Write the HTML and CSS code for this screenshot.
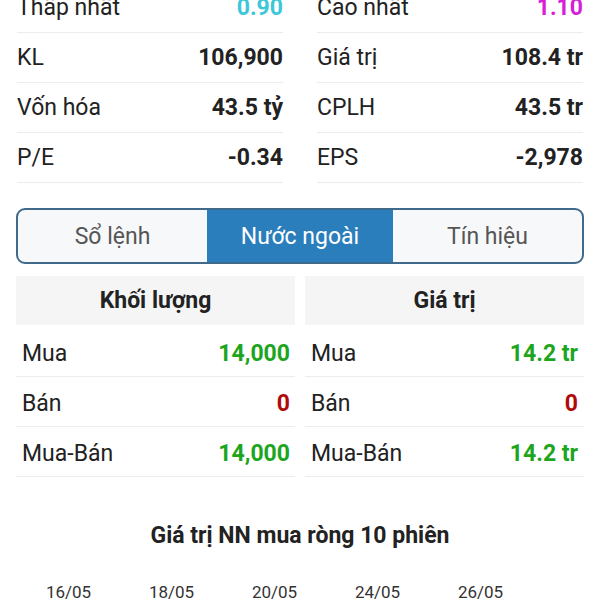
FILE: index.html
```html
<!DOCTYPE html>
<html lang="vi">
<head>
    <meta charset="UTF-8">
    <meta name="viewport" content="width=device-width, initial-scale=1.0">
    <title>Nước ngoài</title>
    <link rel="stylesheet" href="styles.css">
</head>
<body>
    <div class="page">
        <div class="stats">
            <div class="stat-col">
                <div class="stat-row"><span>Thấp nhất</span><b class="low">0.90</b></div>
                <div class="stat-row"><span>KL</span><b>106,900</b></div>
                <div class="stat-row"><span>Vốn hóa</span><b>43.5 tỷ</b></div>
                <div class="stat-row"><span>P/E</span><b>-0.34</b></div>
            </div>
            <div class="stat-col">
                <div class="stat-row"><span>Cao nhất</span><b class="high">1.10</b></div>
                <div class="stat-row"><span>Giá trị</span><b>108.4 tr</b></div>
                <div class="stat-row"><span>CPLH</span><b>43.5 tr</b></div>
                <div class="stat-row"><span>EPS</span><b>-2,978</b></div>
            </div>
        </div>

        <div class="tabs">
            <div class="tab">Sổ lệnh</div>
            <div class="tab active">Nước ngoài</div>
            <div class="tab">Tín hiệu</div>
        </div>

        <div class="foreign">
            <div class="f-table">
                <div class="f-head">Khối lượng</div>
                <div class="f-row"><span>Mua</span><b class="up">14,000</b></div>
                <div class="f-row"><span>Bán</span><b class="down">0</b></div>
                <div class="f-row"><span>Mua-Bán</span><b class="up">14,000</b></div>
            </div>
            <div class="f-table">
                <div class="f-head">Giá trị</div>
                <div class="f-row"><span>Mua</span><b class="up">14.2 tr</b></div>
                <div class="f-row"><span>Bán</span><b class="down">0</b></div>
                <div class="f-row"><span>Mua-Bán</span><b class="up">14.2 tr</b></div>
            </div>
        </div>

        <div class="chart-title">Giá trị NN mua ròng 10 phiên</div>
        <div class="chart-axis">
            <span>16/05</span>
            <span>18/05</span>
            <span>20/05</span>
            <span>24/05</span>
            <span>26/05</span>
        </div>
    </div>
</body>
</html>
```

FILE: styles.css
```css
body {
    margin: 0;
    background-color: #fff;
    font-family: Roboto, "Noto Sans", sans-serif;
    color: #222;
    overflow: hidden;
}

.page {
    margin-top: -17px;
}

/* Thong tin co ban */
.stats {
    display: flex;
    gap: 34px;
    padding: 0 17px;
}

.stat-col {
    flex: 1;
}

.stat-row {
    display: flex;
    justify-content: space-between;
    align-items: center;
    height: 49px;
    border-bottom: 1px solid #ececec;
    font-size: 23px;
}

.stat-row b {
    font-weight: 700;
    color: #222;
}

.stat-row b.low {
    color: #3cc8d8;
}

.stat-row b.high {
    color: #d81fd8;
}

/* Tabs */
.tabs {
    display: flex;
    margin: 25px 16px 0;
    height: 52px;
    border: 2px solid #3f6a8c;
    border-radius: 9px;
    overflow: hidden;
    background-color: #f7f8fa;
}

.tab {
    flex: 1;
    display: flex;
    align-items: center;
    justify-content: center;
    font-size: 23px;
    color: #555;
}

.tab.active {
    flex: 0 0 186px;
    background-color: #2a7ebb;
    color: #fff;
}

/* Bang nuoc ngoai */
.foreign {
    display: flex;
    gap: 10px;
    margin: 12px 16px 0;
}

.f-table {
    flex: 1;
}

.f-head {
    height: 49px;
    margin-bottom: 2px;
    display: flex;
    align-items: center;
    justify-content: center;
    background-color: #f5f5f5;
    font-size: 23px;
    font-weight: 700;
}

.f-row {
    display: flex;
    justify-content: space-between;
    align-items: center;
    box-sizing: border-box;
    height: 50px;
    padding: 4px 6px 0;
    border-bottom: 1px solid #ececec;
    font-size: 23px;
}

.f-table:first-child .f-row {
    padding-right: 5px;
}

.f-row b.up {
    color: #1ea51e;
}

.f-row b.down {
    color: #b00b0b;
}

/* Bieu do */
.chart-title {
    margin-top: 45px;
    text-align: center;
    font-size: 23px;
    font-weight: 700;
    color: #222;
}

.chart-axis {
    display: grid;
    grid-template-columns: repeat(5, 103px);
    padding-left: 17px;
    margin-top: 33px;
    font-size: 17px;
    color: #333;
}

.chart-axis span {
    text-align: center;
}
```
